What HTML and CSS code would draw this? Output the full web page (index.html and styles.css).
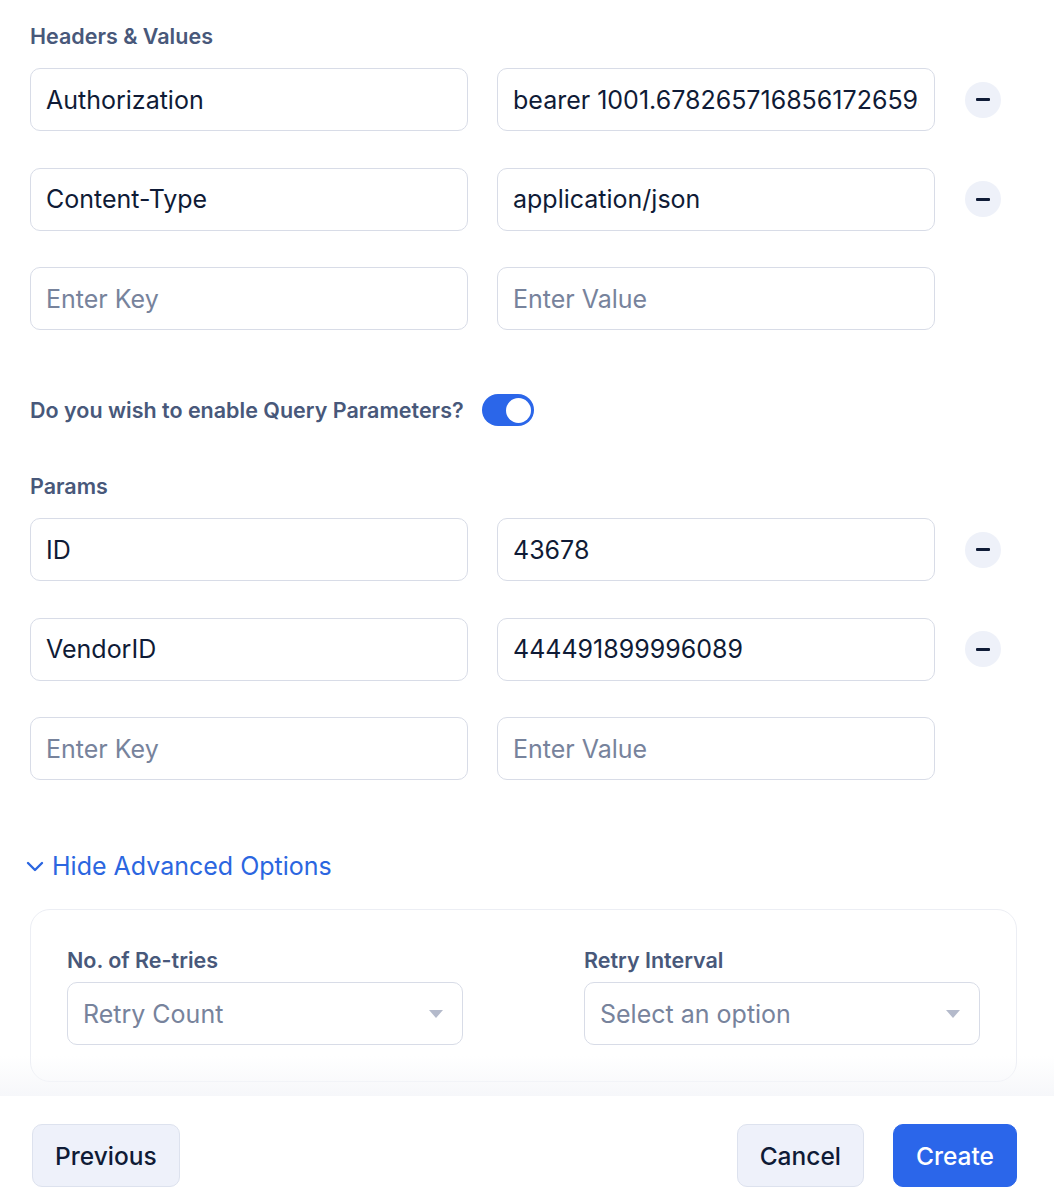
FILE: index.html
```html
<!DOCTYPE html>
<html lang="en">
<head>
  <meta charset="UTF-8" />
  <meta name="viewport" content="width=device-width, initial-scale=1" />
  <title>Create Webhook</title>
  <link rel="stylesheet" href="styles.css">
</head>
<body>
  <div class="scroll">
    <section class="section">
      <h3 class="label">Headers &amp; Values</h3>
      <div class="kv-list">
        <div class="kv-row">
          <input class="field" type="text" value="Authorization" />
          <input class="field" type="text" value="bearer 1001.678265716856172659a2e1b3f4" />
          <button class="remove" type="button" aria-label="Remove"><span></span></button>
        </div>
        <div class="kv-row">
          <input class="field" type="text" value="Content-Type" />
          <input class="field" type="text" value="application/json" />
          <button class="remove" type="button" aria-label="Remove"><span></span></button>
        </div>
        <div class="kv-row">
          <input class="field" type="text" placeholder="Enter Key" />
          <input class="field" type="text" placeholder="Enter Value" />
        </div>
      </div>
    </section>

    <div class="toggle-row">
      <span class="label">Do you wish to enable Query Parameters?</span>
      <span class="toggle on"><span class="knob"></span></span>
    </div>

    <section class="section params">
      <h3 class="label">Params</h3>
      <div class="kv-list">
        <div class="kv-row">
          <input class="field" type="text" value="ID" />
          <input class="field" type="text" value="43678" />
          <button class="remove" type="button" aria-label="Remove"><span></span></button>
        </div>
        <div class="kv-row">
          <input class="field" type="text" value="VendorID" />
          <input class="field" type="text" value="444491899996089" />
          <button class="remove" type="button" aria-label="Remove"><span></span></button>
        </div>
        <div class="kv-row">
          <input class="field" type="text" placeholder="Enter Key" />
          <input class="field" type="text" placeholder="Enter Value" />
        </div>
      </div>
    </section>

    <button class="advanced-link" type="button">
      <svg width="20" height="14" viewBox="0 0 20 14" fill="none">
        <path d="M3 4l7 7 7-7" stroke="currentColor" stroke-width="2.4" stroke-linecap="round" stroke-linejoin="round"/>
      </svg>
      Hide Advanced Options
    </button>

    <div class="advanced">
      <div class="adv-field">
        <h3 class="label">No. of Re-tries</h3>
        <div class="select">
          <span class="placeholder">Retry Count</span>
          <span class="caret"></span>
        </div>
      </div>
      <div class="adv-field">
        <h3 class="label">Retry Interval</h3>
        <div class="select">
          <span class="placeholder">Select an option</span>
          <span class="caret"></span>
        </div>
      </div>
    </div>
  </div>

  <footer class="footer">
    <button class="btn btn-light" type="button">Previous</button>
    <div class="footer-right">
      <button class="btn btn-light" type="button">Cancel</button>
      <button class="btn btn-primary" type="button">Create</button>
    </div>
  </footer>
</body>
</html>
```

FILE: styles.css
```css
* {
  box-sizing: border-box;
}
body {
  margin: 0;
  font-family: 'Inter', 'Noto Sans', sans-serif;
  background-color: #fff;
  color: #0f1b36;
}
.scroll {
  position: relative;
  height: 1096px;
  overflow: hidden;
  padding: 24px 37px 14px 30px;
}
.scroll::after {
  content: '';
  position: absolute;
  left: 0;
  right: 0;
  bottom: 0;
  height: 40px;
  background: linear-gradient(to bottom, rgba(246, 247, 250, 0), #f6f7fa);
}
.label {
  margin: 0;
  font-size: 21.5px;
  line-height: 24px;
  font-weight: 600;
  color: #48587a;
}
.section .label {
  margin-bottom: 20px;
}
.kv-list {
  display: flex;
  flex-direction: column;
  gap: 36.5px;
}
.kv-row {
  display: flex;
  align-items: center;
}
.field {
  width: 438px;
  height: 63px;
  padding: 0 15px;
  border: 1px solid #d8dce7;
  border-radius: 10px;
  font-family: inherit;
  font-size: 25px;
  color: #0f1b36;
  background: #fff;
  outline: none;
}
.field + .field {
  margin-left: 29px;
}
.field::placeholder {
  color: #77839c;
}
.remove {
  width: 36px;
  height: 36px;
  margin-left: 30px;
  border: none;
  border-radius: 50%;
  background-color: #eef1f9;
  display: flex;
  align-items: center;
  justify-content: center;
  padding: 0;
  cursor: pointer;
}
.remove span {
  width: 14px;
  height: 3px;
  border-radius: 1px;
  background-color: #0f1b36;
}
.toggle-row {
  display: flex;
  align-items: center;
  gap: 18px;
  margin-top: 64px;
}
.toggle {
  display: flex;
  align-items: center;
  width: 52px;
  height: 32px;
  border-radius: 16px;
  background-color: #2b66e9;
  padding: 0 3px;
}
.toggle.on {
  justify-content: flex-end;
}
.knob {
  width: 25px;
  height: 25px;
  border-radius: 50%;
  background-color: #fff;
}
.params {
  margin-top: 48px;
}
.advanced-link {
  display: flex;
  align-items: center;
  gap: 7px;
  margin: 71px 0 0 -5px;
  padding: 0;
  border: none;
  background: none;
  font-family: inherit;
  font-size: 25px;
  line-height: 30px;
  color: #2b66e0;
  cursor: pointer;
}
.advanced {
  margin-top: 28px;
  border: 1px solid #eceef4;
  border-radius: 20px;
  padding: 38px 36px 36px;
  display: flex;
  justify-content: space-between;
}
.adv-field {
  width: 396px;
}
.adv-field .label {
  margin-bottom: 10px;
}
.select {
  height: 63px;
  border: 1px solid #d8dce7;
  border-radius: 10px;
  padding: 0 19px 0 15px;
  display: flex;
  align-items: center;
  justify-content: space-between;
}
.placeholder {
  font-size: 25px;
  color: #77839c;
}
.caret {
  width: 0;
  height: 0;
  border-left: 7px solid transparent;
  border-right: 7px solid transparent;
  border-top: 8px solid #b4bacb;
}
.footer {
  height: 106px;
  padding: 28px 37px 0 32px;
  display: flex;
  justify-content: space-between;
  align-items: flex-start;
  background-color: #fff;
}
.footer-right {
  display: flex;
  gap: 29px;
}
.btn {
  height: 63px;
  padding: 0 22px;
  border-radius: 10px;
  font-family: inherit;
  font-size: 24.5px;
  font-weight: 500;
  cursor: pointer;
}
.btn-light {
  background-color: #eef1fa;
  border: 1px solid #dde2ee;
  color: #0f1b36;
}
.btn-primary {
  background-color: #2b66ea;
  border: 1px solid #2b66ea;
  color: #fff;
}
```
